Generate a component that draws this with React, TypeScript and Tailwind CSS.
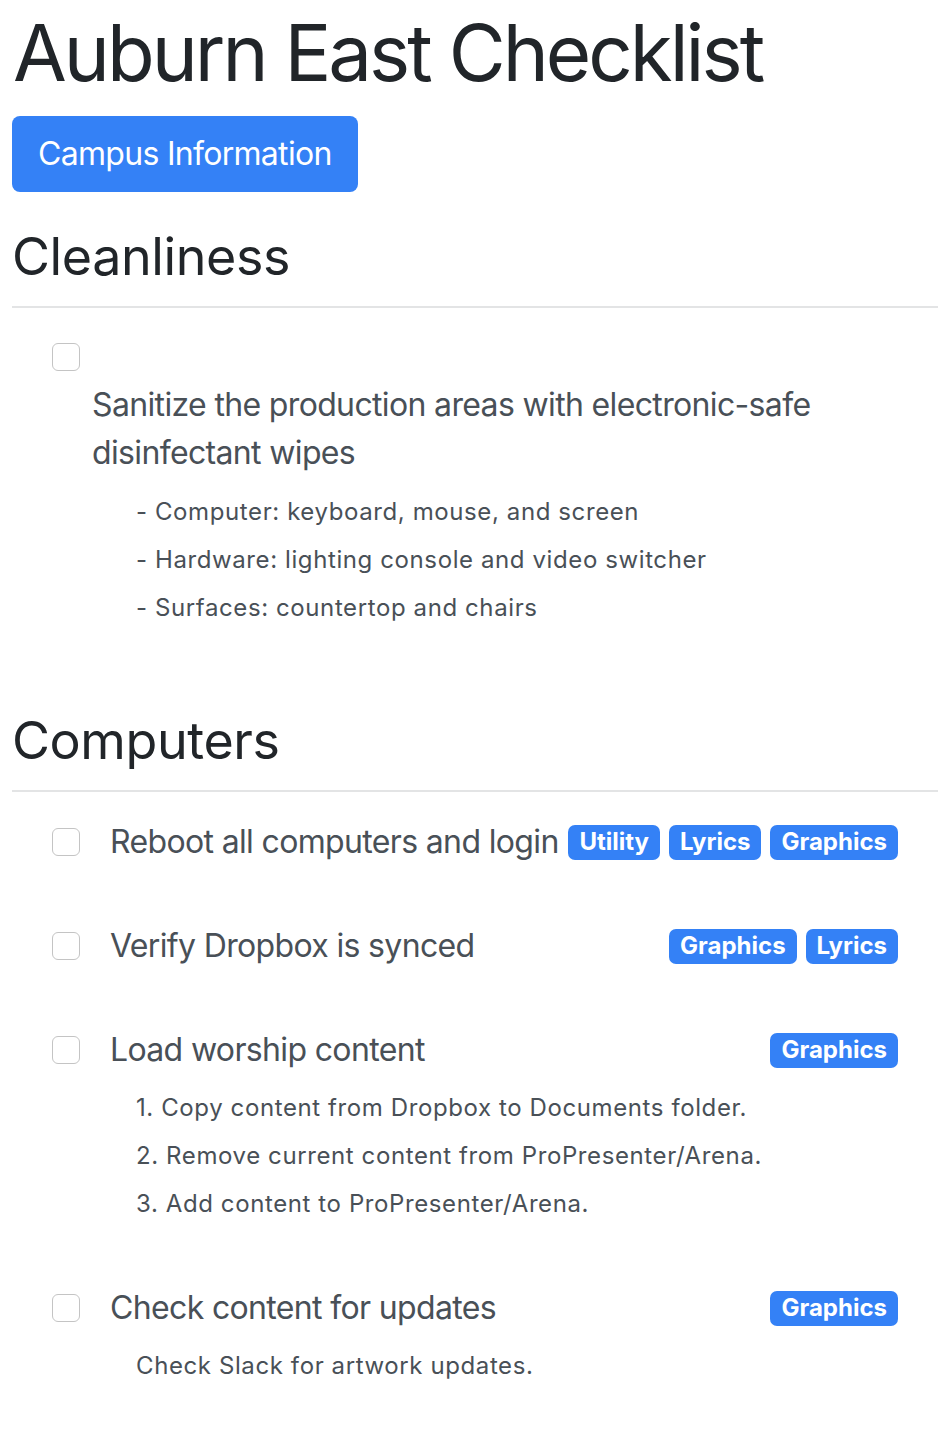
import React from 'react';

type Task = {
  title: string;
  badges: string[];
  notes?: string[];
};

const computerTasks: Task[] = [
  { title: 'Reboot all computers and login', badges: ['Utility', 'Lyrics', 'Graphics'] },
  { title: 'Verify Dropbox is synced', badges: ['Graphics', 'Lyrics'] },
  {
    title: 'Load worship content',
    badges: ['Graphics'],
    notes: [
      '1. Copy content from Dropbox to Documents folder.',
      '2. Remove current content from ProPresenter/Arena.',
      '3. Add content to ProPresenter/Arena.',
    ],
  },
  {
    title: 'Check content for updates',
    badges: ['Graphics'],
    notes: ['Check Slack for artwork updates.'],
  },
];

const cleanNotes = [
  '- Computer: keyboard, mouse, and screen',
  '- Hardware: lighting console and video switcher',
  '- Surfaces: countertop and chairs',
];

const Checkbox = () => (
  <span className="block w-[28px] h-[28px] shrink-0 rounded-[6px] border-[1.5px] border-[#c4c4c4] bg-white" />
);

const Badge = ({ label }: { label: string }) => (
  <span className="inline-flex items-center h-[35px] px-[11px] rounded-[7px] bg-[#3481f6] text-white text-[24px] font-bold leading-none">
    {label}
  </span>
);

const Notes = ({ items, className = 'mt-[10px]' }: { items: string[]; className?: string }) => (
  <div className={`pl-[84px] ${className}`}>
    {items.map((n) => (
      <p key={n} className="text-[24px] leading-[48px] text-[#495057] tracking-[0.6px]">
        {n}
      </p>
    ))}
  </div>
);

const SectionTitle = ({ children, className = '' }: { children: React.ReactNode; className?: string }) => (
  <>
    <h2 className={`text-[52px] leading-[62px] text-[#212529] tracking-[-0.4px] ${className}`}>{children}</h2>
    <hr className="mt-[18px] border-0 h-[2px] bg-[#e3e4e5]" />
  </>
);

export default function App() {
  return (
    <div className="min-h-[1436px] bg-white pl-[12px] pr-[8px] pt-[6px] font-['Inter','Liberation_Sans',sans-serif]">
      <h1 className="text-[78px] leading-[94px] text-[#212529] tracking-[-3px] pl-[1px]">Auburn East Checklist</h1>

      <button className="mt-[16px] h-[76px] px-[26px] rounded-[8px] bg-[#3481f6] text-white text-[32px] leading-[48px] tracking-[-0.7px]">
        Campus Information
      </button>

      <SectionTitle className="mt-[34px]">Cleanliness</SectionTitle>

      <div className="px-[40px] pt-[25px]">
        <div className="flex items-center h-[48px]">
          <Checkbox />
        </div>
        <p className="pl-[40px] pr-[40px] text-[32px] leading-[48px] text-[#495057] tracking-[-0.65px]">
          Sanitize the production areas with electronic-safe disinfectant wipes
        </p>
        <Notes items={cleanNotes} className="mt-[11px]" />
      </div>

      <SectionTitle className="mt-[78px]">Computers</SectionTitle>

      <div className="px-[40px] pt-[26px] flex flex-col gap-[56px]">
        {computerTasks.map((t) => (
          <div key={t.title}>
            <div className="flex items-center h-[48px]">
              <Checkbox />
              <span className="ml-[30px] text-[32px] leading-[48px] text-[#495057] tracking-[-0.65px] whitespace-nowrap">
                {t.title}
              </span>
              <div className="ml-auto flex items-center gap-[9px]">
                {t.badges.map((b) => (
                  <Badge key={b} label={b} />
                ))}
              </div>
            </div>
            {t.notes && <Notes items={t.notes} />}
          </div>
        ))}
      </div>
    </div>
  );
}
